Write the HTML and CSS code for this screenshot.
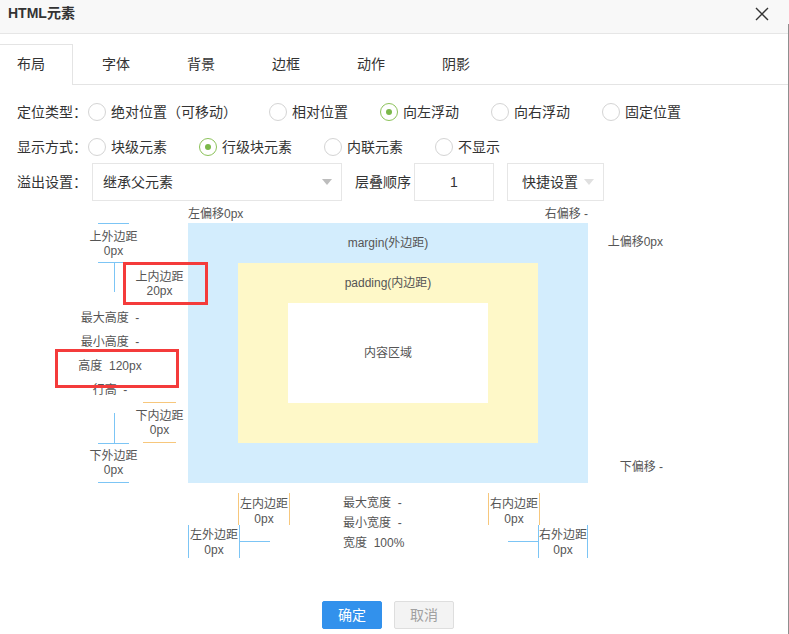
FILE: index.html
```html
<!DOCTYPE html>
<html lang="zh-CN">
<head>
<meta charset="utf-8">
<title>HTML元素</title>
<link rel="stylesheet" href="styles.css">
</head>
<body>
<div class="dialog">
  <div class="header">
    <span class="title">HTML元素</span>
    <span class="close"><svg width="14" height="14" viewBox="0 0 14 14"><path d="M1 1L13 13M13 1L1 13" stroke="#333" stroke-width="1.4" fill="none"/></svg></span>
  </div>
  <div class="tabs">
    <div class="tab active">布局</div>
    <div class="tab">字体</div>
    <div class="tab">背景</div>
    <div class="tab">边框</div>
    <div class="tab">动作</div>
    <div class="tab">阴影</div>
  </div>

  <div class="row r1">
    <span class="label">定位类型：</span>
    <span class="radio"><span class="dot"></span>绝对位置（可移动）</span>
    <span class="radio"><span class="dot"></span>相对位置</span>
    <span class="radio checked"><span class="dot"></span>向左浮动</span>
    <span class="radio"><span class="dot"></span>向右浮动</span>
    <span class="radio"><span class="dot"></span>固定位置</span>
  </div>
  <div class="row r2">
    <span class="label">显示方式：</span>
    <span class="radio"><span class="dot"></span>块级元素</span>
    <span class="radio checked"><span class="dot"></span>行级块元素</span>
    <span class="radio"><span class="dot"></span>内联元素</span>
    <span class="radio"><span class="dot"></span>不显示</span>
  </div>
  <div class="row r3">
    <span class="label">溢出设置：</span>
    <div class="select"><span>继承父元素</span><span class="tri"></span></div>
    <span class="zlabel">层叠顺序</span>
    <div class="num">1</div>
    <div class="quick"><span>快捷设置</span><span class="tri light"></span></div>
  </div>

  <div class="diagram">
    <div class="offsets">
      <span>左偏移0px</span>
      <span>右偏移 -</span>
    </div>

    <div class="leftcol">
      <div class="mblock mtop"><div>上外边距</div><div>0px</div></div>
      <div class="vrow">
        <span class="vline"></span>
        <div class="pblock"><div>上内边距</div><div>20px</div></div>
      </div>
      <div class="hlines">
        <div>最大高度&nbsp;&nbsp;-</div>
        <div>最小高度&nbsp;&nbsp;-</div>
        <div>高度&nbsp;&nbsp;120px</div>
        <div>行高&nbsp;&nbsp;-</div>
      </div>
      <div class="vrow">
        <span class="vline bottom"></span>
        <div class="pblock"><div>下内边距</div><div>0px</div></div>
      </div>
      <div class="mblock"><div>下外边距</div><div>0px</div></div>
      <div class="mark mark1"></div>
      <div class="mark mark2"></div>
    </div>

    <div class="marginbox">
      <div class="boxlabel">margin(外边距)</div>
      <div class="paddingbox">
        <div class="boxlabel">padding(内边距)</div>
        <div class="contentbox">内容区域</div>
      </div>
    </div>

    <div class="rightcol">
      <span>上偏移0px</span>
      <span class="down">下偏移 -</span>
    </div>

    <div class="bottomarea">
      <div class="side">
        <div class="vpad left"><div>左内边距</div><div>0px</div></div>
        <div class="hrow">
          <div class="vmar"><div>左外边距</div><div>0px</div></div>
          <span class="hline"></span>
        </div>
      </div>
      <div class="wlines">
        <div>最大宽度&nbsp;&nbsp;-</div>
        <div>最小宽度&nbsp;&nbsp;-</div>
        <div>宽度&nbsp;&nbsp;100%</div>
      </div>
      <div class="side">
        <div class="vpad"><div>右内边距</div><div>0px</div></div>
        <div class="hrow">
          <span class="hline right"></span>
          <div class="vmar"><div>右外边距</div><div>0px</div></div>
        </div>
      </div>
    </div>
  </div>

  <div class="footer">
    <button class="btn ok">确定</button>
    <button class="btn cancel">取消</button>
  </div>
</div>
</body>
</html>
```

FILE: styles.css
```css
html, body {
  margin: 0;
  padding: 0;
  background: #fff;
}

body {
  font-family: "Liberation Sans", "Noto Sans CJK SC", sans-serif;
  color: #333;
}

.dialog {
  position: relative;
  width: 789px;
  height: 634px;
  overflow: hidden;
  background: #fff;
}

.dialog::after {
  content: "";
  position: absolute;
  right: 0;
  top: 24px;
  bottom: 0;
  width: 1px;
  background: #8f8f8f;
}

/* header */
.header {
  height: 33px;
  background: #f8f8f8;
  border-bottom: 1px solid #e6e6e6;
  display: flex;
  justify-content: space-between;
  align-items: flex-start;
  padding: 0 20px 0 8px;
}

.title {
  font-size: 14px;
  font-weight: bold;
  line-height: 27px;
  color: #333;
}

.close {
  margin-top: 7px;
  display: flex;
}

/* tabs */
.tabs {
  display: flex;
  align-items: flex-start;
  margin-top: 10px;
  height: 40px;
  border-bottom: 1px solid #e4e4e4;
}

.tab {
  width: 73px;
  box-sizing: border-box;
  padding-left: 17px;
  margin-right: 12px;
  font-size: 14px;
  line-height: 40px;
  height: 40px;
  color: #333;
}

.tab.active {
  height: 41px;
  line-height: 38px;
  border-top: 1px solid #e4e4e4;
  border-right: 1px solid #e4e4e4;
  background: #fff;
}

/* form rows */
.row {
  display: flex;
  align-items: center;
  padding-left: 17px;
  font-size: 14px;
  line-height: 20px;
  color: #333;
  white-space: nowrap;
}

.r1 { margin-top: 12px; height: 30px; }
.r2 { margin-top: 5px; height: 30px; }
.r3 { margin-top: 1px; height: 38px; }

.label {
  width: 71px;
}

.radio {
  display: flex;
  align-items: center;
  margin-right: 32px;
}

.dot {
  width: 18px;
  height: 18px;
  box-sizing: border-box;
  border: 1px solid #d4d4d4;
  border-radius: 50%;
  margin-right: 5px;
  display: flex;
  align-items: center;
  justify-content: center;
}

.radio.checked .dot {
  border-color: #8cc25a;
}

.radio.checked .dot::after {
  content: "";
  width: 6px;
  height: 6px;
  border-radius: 50%;
  background: #7bb84a;
}

.select {
  margin-left: 4px;
  width: 250px;
  height: 38px;
  box-sizing: border-box;
  border: 1px solid #e6e6e6;
  display: flex;
  align-items: center;
  justify-content: space-between;
  padding: 0 9px 0 10px;
}

.tri {
  width: 0;
  height: 0;
  border-left: 5px solid transparent;
  border-right: 5px solid transparent;
  border-top: 6px solid #bdbdbd;
}

.tri.light {
  border-top-color: #e0e0e0;
  margin-left: 6px;
}

.zlabel {
  margin-left: 13px;
}

.num {
  margin-left: 3px;
  width: 80px;
  height: 38px;
  box-sizing: border-box;
  border: 1px solid #e6e6e6;
  display: flex;
  align-items: center;
  justify-content: center;
}

.quick {
  margin-left: 13px;
  width: 97px;
  height: 38px;
  box-sizing: border-box;
  border: 1px solid #e6e6e6;
  display: flex;
  align-items: center;
  padding-left: 14px;
}

/* box model diagram */
.diagram {
  margin-top: 4px;
  display: grid;
  grid-template-columns: 188px 400px 75px;
  grid-template-rows: 18px 260px auto;
  font-size: 12px;
  color: #555;
  line-height: 14px;
  white-space: nowrap;
}

.offsets {
  grid-column: 2;
  grid-row: 1;
  display: flex;
  justify-content: space-between;
  line-height: 18px;
}

.leftcol {
  grid-column: 1;
  grid-row: 2;
  position: relative;
  display: flex;
  flex-direction: column;
}

.mblock {
  margin-left: 98px;
  width: 31px;
  height: 41px;
  box-sizing: border-box;
  border-top: 1px solid #7cc5f5;
  border-bottom: 1px solid #7cc5f5;
  display: flex;
  flex-direction: column;
  align-items: center;
  justify-content: center;
}

.mtop {
  padding-top: 2px;
}

.vrow {
  display: flex;
  align-items: flex-start;
  height: 41px;
}

.vline {
  margin-left: 114px;
  width: 1px;
  height: 29px;
  background: #7cc5f5;
}

.vline.bottom {
  align-self: flex-end;
  height: 30px;
}

.pblock {
  margin-left: 28px;
  width: 33px;
  height: 41px;
  box-sizing: border-box;
  border-top: 1px solid #f7c77c;
  border-bottom: 1px solid #f7c77c;
  display: flex;
  flex-direction: column;
  align-items: center;
  justify-content: center;
}

.hlines {
  margin-top: 2px;
  padding-left: 32px;
  text-align: center;
  line-height: 24px;
}

.mark {
  position: absolute;
  border: 3px solid #f43b3b;
  box-sizing: border-box;
  z-index: 2;
}

.mark1 {
  left: 123px;
  top: 39px;
  width: 85px;
  height: 43px;
}

.mark2 {
  left: 55px;
  top: 126px;
  width: 124px;
  height: 39px;
}

.marginbox {
  grid-column: 2;
  grid-row: 2;
  background: #d3edfd;
  padding: 0 50px 40px;
  display: flex;
  flex-direction: column;
}

.boxlabel {
  height: 40px;
  line-height: 40px;
  text-align: center;
}

.paddingbox {
  background: #fef8c8;
  height: 180px;
  padding: 0 50px;
  display: flex;
  flex-direction: column;
}

.contentbox {
  background: #fff;
  height: 100px;
  display: flex;
  align-items: center;
  justify-content: center;
}

.rightcol {
  grid-column: 3;
  grid-row: 2;
  display: flex;
  flex-direction: column;
  align-items: flex-end;
  line-height: 18px;
  padding-top: 10px;
}

.rightcol .down {
  margin-top: auto;
  margin-bottom: 7px;
}

.bottomarea {
  grid-column: 2;
  grid-row: 3;
  display: grid;
  grid-template-columns: 100px 200px 100px;
}

.side {
  display: flex;
  flex-direction: column;
  padding-top: 10px;
}

.vpad {
  width: 52px;
  height: 32px;
  box-sizing: border-box;
  border-left: 1px solid #f7c77c;
  border-right: 1px solid #f7c77c;
  display: flex;
  flex-direction: column;
  align-items: center;
  padding-top: 4px;
  line-height: 15px;
}

.vpad.left {
  margin-left: 50px;
}

.hrow {
  display: flex;
  align-items: flex-start;
}

.vmar {
  width: 52px;
  height: 33px;
  box-sizing: border-box;
  border-left: 1px solid #7cc5f5;
  border-right: 1px solid #7cc5f5;
  display: flex;
  flex-direction: column;
  align-items: center;
  padding-top: 3px;
  line-height: 15px;
}

.hline {
  width: 30px;
  height: 1px;
  margin-top: 16px;
  background: #7cc5f5;
  flex-shrink: 0;
}

.hline.right {
  margin-left: 20px;
}

.wlines {
  padding-left: 55px;
  padding-top: 10px;
  line-height: 20px;
}

/* footer */
.footer {
  width: 776px;
  margin-top: 43px;
  display: flex;
  justify-content: center;
  gap: 12px;
}

.btn {
  width: 60px;
  height: 28px;
  box-sizing: border-box;
  font-family: "Liberation Sans", "Noto Sans CJK SC", sans-serif;
  font-size: 14px;
  line-height: 26px;
  padding: 0;
  border-radius: 2px;
}

.btn.ok {
  background: #3291ec;
  border: 1px solid #3291ec;
  color: #fff;
}

.btn.cancel {
  background: #f3f3f3;
  border: 1px solid #dedede;
  color: #a0a0a0;
}
```
